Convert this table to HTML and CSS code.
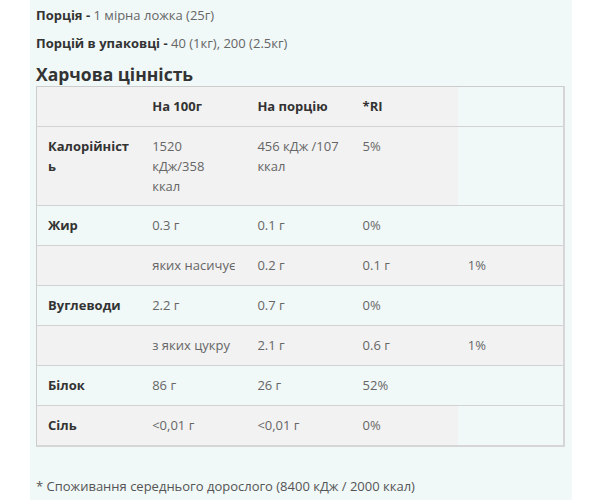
FILE: index.html
```html
<!DOCTYPE html>
<html lang="uk">
<head>
<meta charset="utf-8">
<title>Харчова цінність</title>
<link rel="stylesheet" href="styles.css">
</head>
<body>
<div class="panel">
  <p class="info"><b>Порція -</b> <span class="val">1 мірна ложка (25г)</span></p>
  <p class="info"><b>Порцій в упаковці -</b> <span class="val">40 (1кг), 200 (2.5кг)</span></p>
  <h2 class="title">Харчова цінність</h2>
  <table class="nutri">
    <thead>
      <tr>
        <th class="lbl"></th>
        <th>На 100г</th>
        <th>На порцію</th>
        <th>*RI</th>
        <th class="blank"></th>
      </tr>
    </thead>
    <tbody>
      <tr class="tall">
        <th class="lbl">Калорійність</th>
        <td>1520 кДж/358 ккал</td>
        <td>456 кДж /107 ккал</td>
        <td>5%</td>
        <td class="blank"></td>
      </tr>
      <tr>
        <th class="lbl">Жир</th>
        <td>0.3 г</td>
        <td>0.1 г</td>
        <td>0%</td>
        <td class="blank"></td>
      </tr>
      <tr>
        <th class="lbl"></th>
        <td><div class="clip">яких насичує</div></td>
        <td>0.2 г</td>
        <td>0.1 г</td>
        <td>1%</td>
      </tr>
      <tr>
        <th class="lbl">Вуглеводи</th>
        <td>2.2 г</td>
        <td>0.7 г</td>
        <td>0%</td>
        <td class="blank"></td>
      </tr>
      <tr>
        <th class="lbl"></th>
        <td>з яких цукру</td>
        <td>2.1 г</td>
        <td>0.6 г</td>
        <td>1%</td>
      </tr>
      <tr>
        <th class="lbl">Білок</th>
        <td>86 г</td>
        <td>26 г</td>
        <td>52%</td>
        <td class="blank"></td>
      </tr>
      <tr>
        <th class="lbl">Сіль</th>
        <td>&lt;0,01 г</td>
        <td>&lt;0,01 г</td>
        <td>0%</td>
        <td class="blank"></td>
      </tr>
    </tbody>
  </table>
  <p class="note">* Споживання середнього дорослого (8400 кДж / 2000 ккал)</p>
</div>
</body>
</html>
```
FILE: styles.css
```css
html, body {
  margin: 0;
  padding: 0;
  background: #ffffff;
}
body {
  font-family: "Open Sans", "Noto Sans", sans-serif;
  color: #333333;
}
.panel {
  margin-left: 30px;
  width: 542px;
  min-height: 500px;
  box-sizing: border-box;
  background: #f0f8f8;
  padding: 5px 0 0 6px;
}
.info {
  margin: 0 0 8px 0;
  font-size: 13px;
  line-height: 20px;
}
.info b {
  font-weight: 700;
  color: #333333;
}
.val {
  color: #666666;
}
.title {
  margin: 9px 0 0 0;
  font-size: 17.5px;
  line-height: 24px;
  font-weight: 700;
  color: #333333;
}
.nutri {
  width: 529px;
  table-layout: fixed;
  border-collapse: separate;
  border-spacing: 0;
  border-top: 1px solid #cccccc;
  border-left: 1px solid #cccccc;
  border-right: 2px solid #d6d6d6;
  border-bottom: 2px solid #d6d6d6;
  font-size: 13px;
  line-height: 20px;
}
.nutri th,
.nutri td {
  text-align: left;
  vertical-align: top;
  padding: 9px 12px 10px 10px;
  overflow-wrap: anywhere;
  border-bottom: 1px solid #d2d2d2;
}
.nutri .lbl {
  padding-left: 11px;
  padding-right: 10px;
}
.nutri .tall th,
.nutri .tall td {
  padding-bottom: 9px;
}
.nutri thead th {
  background: #f2f2f2;
  font-weight: 700;
  color: #333333;
}
.nutri tbody th.lbl {
  font-weight: 700;
  color: #333333;
}
.nutri td {
  color: #666666;
}
.nutri tbody tr:nth-child(odd) th,
.nutri tbody tr:nth-child(odd) td {
  background: #f2f2f2;
}
.nutri tbody tr:last-child th,
.nutri tbody tr:last-child td {
  border-bottom: 0;
  padding-bottom: 10px;
}
.nutri .blank,
.nutri tbody tr:nth-child(odd) .blank,
.nutri thead .blank {
  background: transparent;
}
.clip {
  white-space: nowrap;
  overflow: hidden;
}
.note {
  margin: 29px 0 0 0;
  font-size: 13px;
  line-height: 20px;
  color: #555555;
}
```
